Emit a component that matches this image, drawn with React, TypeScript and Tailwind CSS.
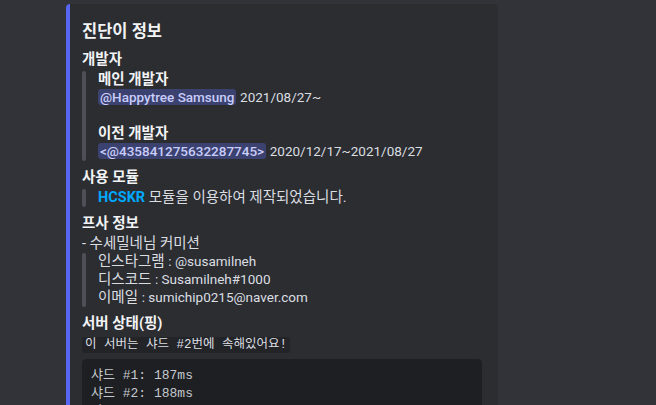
const mono = "font-['Liberation_Mono','Noto_Sans_CJK_KR',monospace]";

const Quote = ({ children }: { children: React.ReactNode }) => (
  <div className="flex">
    <div className="w-1 shrink-0 rounded-[4px] bg-[#4e5058]" />
    <div className="pl-3 pr-2">{children}</div>
  </div>
);

// latin runs sit a touch smaller than the hangul around them
const Latin = ({ children }: { children: React.ReactNode }) => (
  <span className="text-[13.5px] leading-[14px]">{children}</span>
);

const Mention = ({ children }: { children: React.ReactNode }) => (
  <span className="rounded-[3px] bg-[#3c4270] px-[2px] text-[13.5px] font-medium leading-[14px] text-[#c9cdfb]">
    {children}
  </span>
);

const Field = ({ name, children }: { name: string; children: React.ReactNode }) => (
  <div>
    <div className="mb-[2px] text-[14.5px] font-bold leading-[18px] text-[#f2f3f5]">{name}</div>
    <div className="text-[14.5px] leading-[18px] text-[#dbdee1]">{children}</div>
  </div>
);

const shards = ["샤드 #1: 187ms", "샤드 #2: 188ms", "샤드 #3: 186ms", "샤드 #4: 189ms"];

export default function App() {
  return (
    <div className="h-[405px] w-[656px] overflow-hidden bg-[#313338] pl-[66px] pt-1 font-['Roboto','Noto_Sans_CJK_KR',sans-serif]">
      <div className="flex w-[432px] rounded-[4px] bg-[#2b2d31]">
        <div className="w-1 shrink-0 rounded-l-[4px] bg-[#5865f2]" />
        <div className="flex-1 pb-4 pl-3 pr-4 pt-[9px]">
          <div className="mt-2 text-[16.5px] font-bold leading-[22px] text-[#f2f3f5]">진단이 정보</div>
          <div className="mt-2 flex flex-col gap-2">
            <Field name="개발자">
              <Quote>
                <div className="font-bold text-[#f2f3f5]">메인 개발자</div>
                <div>
                  <Mention>@Happytree Samsung</Mention> <Latin>2021/08/27~</Latin>
                </div>
                <div className="h-[18px]" />
                <div className="font-bold text-[#f2f3f5]">이전 개발자</div>
                <div>
                  <Mention>&lt;@435841275632287745&gt;</Mention> <Latin>2020/12/17~2021/08/27</Latin>
                </div>
              </Quote>
            </Field>
            <Field name="사용 모듈">
              <Quote>
                <span className="font-bold text-[#00a8fc]">HCSKR</span> 모듈을 이용하여 제작되었습니다.
              </Quote>
            </Field>
            <Field name="프사 정보">
              <div>- 수세밀네님 커미션</div>
              <Quote>
                <div>
                  인스타그램 <Latin>: @susamilneh</Latin>
                </div>
                <div>
                  디스코드 <Latin>: Susamilneh#1000</Latin>
                </div>
                <div>
                  이메일 <Latin>: sumichip0215@naver.com</Latin>
                </div>
              </Quote>
            </Field>
            <Field name="서버 상태(핑)">
              <div>
                <span className={`${mono} rounded-[3px] bg-[#232428] px-[3px] py-[1px] text-[12.5px] leading-[14px]`}>
                  이 서버는 샤드 #2번에 속해있어요!
                </span>
              </div>
              <pre
                className={`${mono} mt-[6px] whitespace-pre rounded-[4px] border border-[#1e1f22] bg-[#1e1f22] px-2 py-[7px] text-[13px] leading-[18px] text-[#c4c9ce]`}
              >
                {shards.join("\n")}
              </pre>
            </Field>
          </div>
        </div>
      </div>
    </div>
  );
}
